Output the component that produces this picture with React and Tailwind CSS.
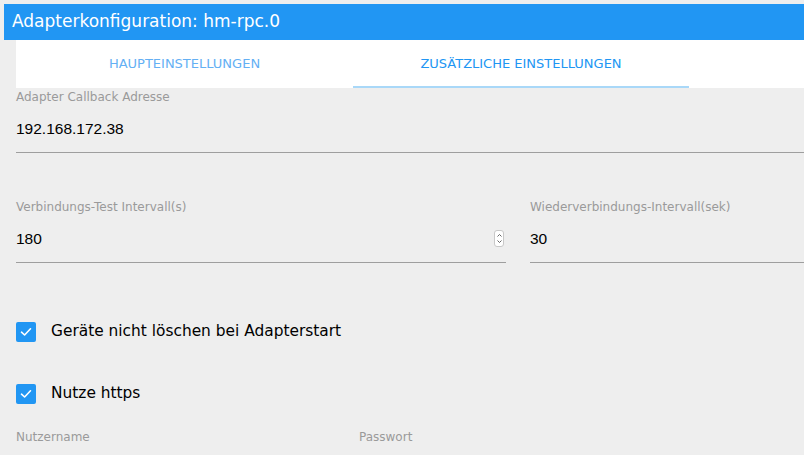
import React from 'react';

const luc = { fontFamily: '"DejaVu Sans", "Open Sans", sans-serif' };

const Field = ({ label, value, stepper }) => (
  <div className="flex flex-col">
    <span className="text-[12px] leading-[16px] text-[#9a9a9a]" style={luc}>{label}</span>
    <div className="flex items-center h-[48px] border-b border-[#9e9e9e]">
      <span className="flex-1 text-[15.5px] text-black font-['Liberation_Sans',sans-serif]">{value}</span>
      {stepper && (
        <span className="mr-[2px] flex h-[17px] w-[10px] flex-col items-center justify-center rounded-[3px] border border-[#c8c8c8] bg-white">
          <svg width="5" height="3" viewBox="0 0 5 3"><path d="M0.5 2.5 L2.5 0.5 L4.5 2.5" fill="none" stroke="#555" strokeWidth="0.9" /></svg>
          <svg width="5" height="3" viewBox="0 0 5 3" className="mt-[3px]"><path d="M0.5 0.5 L2.5 2.5 L4.5 0.5" fill="none" stroke="#555" strokeWidth="0.9" /></svg>
        </span>
      )}
    </div>
  </div>
);

const Check = ({ label }) => (
  <label className="flex h-[24px] items-center gap-[15px]">
    <span className="flex h-[20px] w-[20px] items-center justify-center rounded-[2px] bg-[#2196f3]">
      <svg width="12" height="10" viewBox="0 0 12 10">
        <path d="M1.5 5.2 L4.6 8 L10.5 1.8" fill="none" stroke="white" strokeWidth="1.6" strokeLinecap="round" strokeLinejoin="round" />
      </svg>
    </span>
    <span className="text-[15.4px] text-black" style={luc}>{label}</span>
  </label>
);

export default function App() {
  return (
    <div className="h-[455px] w-[804px] overflow-hidden bg-[#eeeeee] pt-[4px]">
      <div className="ml-[4px] flex h-[36px] items-center bg-[#2196f3] pl-[8px]">
        <span className="text-[17px] text-white" style={luc}>Adapterkonfiguration: hm-rpc.0</span>
      </div>
      <div className="ml-[16px] flex h-[48px] bg-white">
        <div className="flex w-[337px] items-center justify-center text-[13px] text-[#64b0f4]" style={luc}>HAUPTEINSTELLUNGEN</div>
        <div className="relative flex w-[336px] items-center justify-center text-[13px] text-[#2196f3]" style={luc}>
          ZUSÄTZLICHE EINSTELLUNGEN
          <span className="absolute bottom-0 left-0 right-0 h-[2px] bg-[#a9d8f8]" />
        </div>
      </div>
      <div className="pl-[16px]">
        <div className="pt-[1px]">
          <Field label="Adapter Callback Adresse" value="192.168.172.38" />
        </div>
        <div className="mt-[46px] grid grid-cols-[490px_1fr] gap-[24px]">
          <Field label="Verbindungs-Test Intervall(s)" value="180" stepper />
          <Field label="Wiederverbindungs-Intervall(sek)" value="30" />
        </div>
        <div className="mt-[57px] flex flex-col gap-[38px]">
          <Check label="Geräte nicht löschen bei Adapterstart" />
          <Check label="Nutze https" />
        </div>
        <div className="mt-[23px] flex text-[12px] leading-[16px] text-[#9a9a9a]" style={luc}>
          <span className="w-[343px]">Nutzername</span>
          <span>Passwort</span>
        </div>
      </div>
    </div>
  );
}
